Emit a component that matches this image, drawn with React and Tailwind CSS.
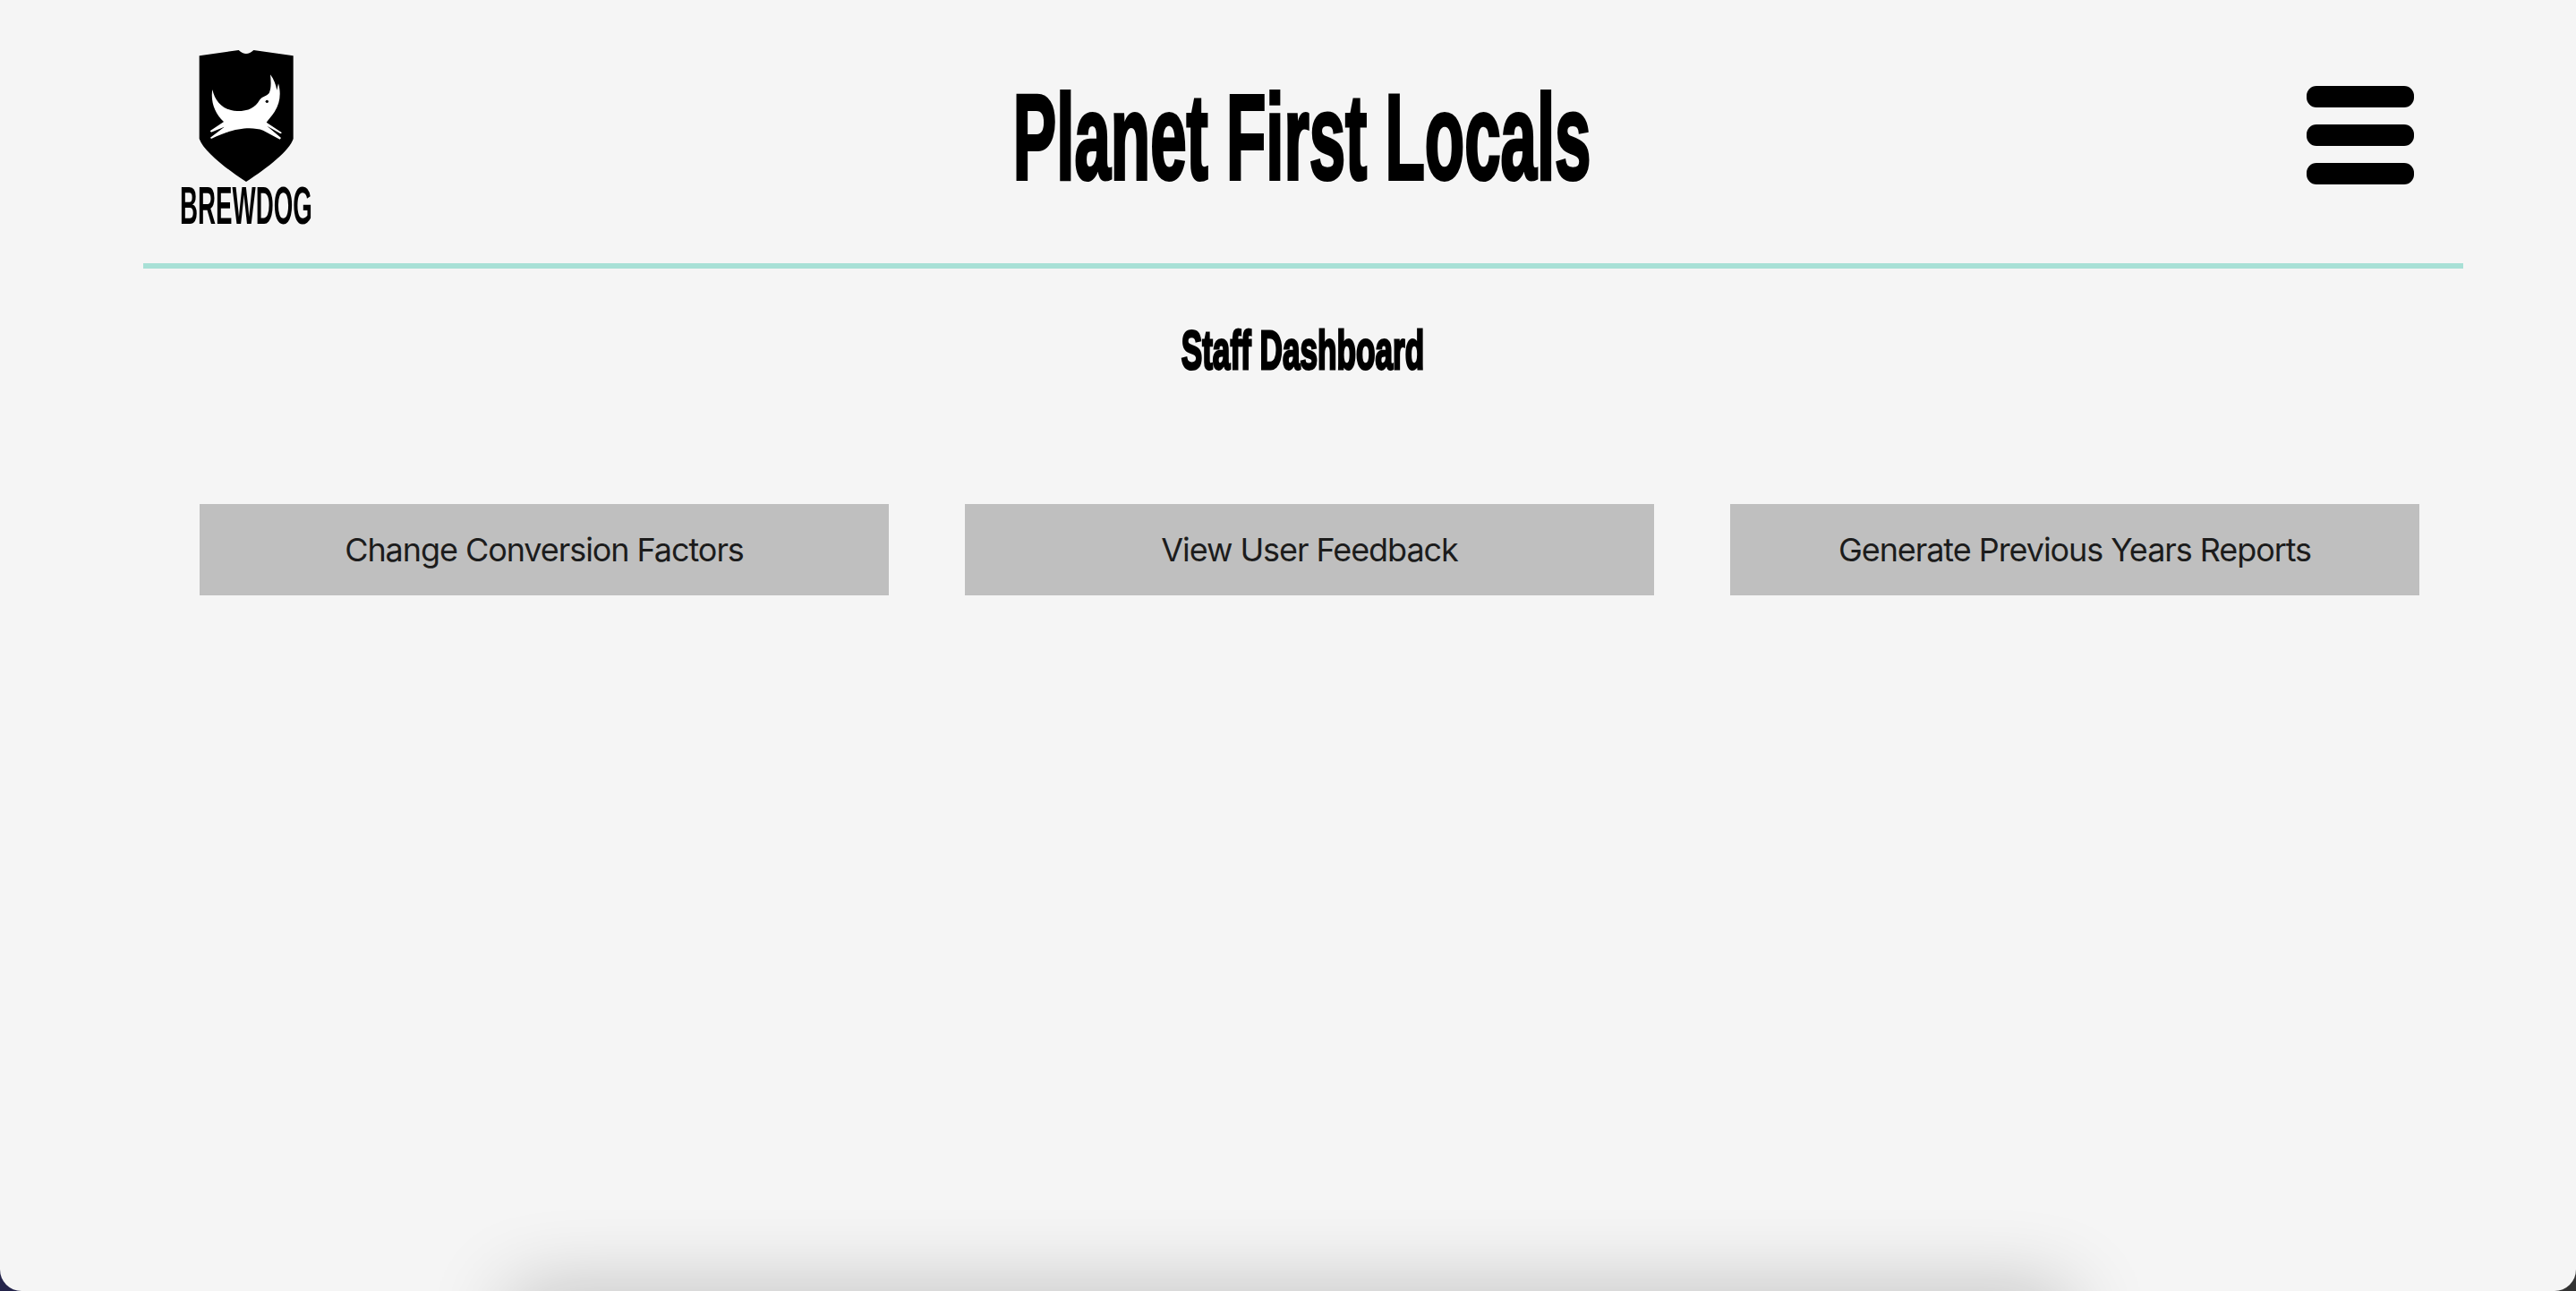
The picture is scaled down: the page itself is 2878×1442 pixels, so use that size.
const displayFont = "font-['Liberation_Sans',sans-serif] font-bold";

function Logo() {
  return (
    <div className="flex w-[150px] flex-col items-center">
      <svg width="150" height="148" viewBox="150 78 450 444" className="block blur-[0.5px]">
        <path d="M218 97 L350 78 Q375 102 400 78 L533 97 L533 375 C520 415 450 470 375 519 C300 470 232 415 218 375 Z" fill="#000" />
        <path
          d="M262 210 C270 250 300 282 345 282 C385 282 405 270 420 245 C430 232 445 232 452 222 C460 205 458 180 456 160 C468 175 475 195 478 212 L483 190 C492 220 490 255 470 285 C460 300 450 310 443 320 L495 355 L490 358 L445 332 L492 372 L488 377 L432 347 C395 335 340 335 258 375 L255 371 L302 335 L258 353 L254 349 L300 318 C270 290 255 250 262 210 Z"
          fill="#fff"
        />
        <circle cx="445" cy="250" r="5" fill="#000" />
      </svg>
      <div className="-mt-[4px] flex w-[150px] justify-center">
        <span className={`${displayFont} shrink-0 scale-x-[0.462] whitespace-nowrap text-[60px] leading-[60px] text-black`}>
          BREWDOG
        </span>
      </div>
    </div>
  );
}

function Menu() {
  return (
    <div className="flex w-[120px] flex-col gap-[19px] blur-[0.5px]">
      <div className="h-6 rounded-[11px] bg-black" />
      <div className="h-6 rounded-[11px] bg-black" />
      <div className="h-6 rounded-[11px] bg-black" />
    </div>
  );
}

function ActionButton({ children }) {
  return (
    <button className="flex h-[102px] w-[770px] items-center justify-center bg-[#bfbfbf] font-['Inter',sans-serif] text-[36px] tracking-[-1.07px] text-[#1c1c1c]">
      {children}
    </button>
  );
}

export default function App() {
  return (
    <div className="h-screen w-full bg-gradient-to-r from-[#23234a] to-[#333333]">
      <div className="relative h-full w-full overflow-hidden rounded-b-[24px] bg-[#f5f5f5]">
        <div className="ml-[160px] w-[2592px]">
          <header className="flex h-[300px] items-start border-b-[6px] border-[#a8e0d6] pl-[40px] pr-[55px]">
            <div className="mt-[56px]">
              <Logo />
            </div>
            <div className="flex flex-1 justify-center pr-[18px] pt-[78px]">
              <h1 className={`${displayFont} origin-center scale-x-[0.534] whitespace-nowrap text-[136px] leading-[150px] text-black [-webkit-text-stroke:4px_black]`}>
                Planet First Locals
              </h1>
            </div>
            <div className="mt-[96px]">
              <Menu />
            </div>
          </header>
          <h2 className={`${displayFont} mt-[53px] scale-x-[0.567] whitespace-nowrap pr-[2px] text-center text-[62px] leading-[76px] text-black [-webkit-text-stroke:3px_black]`}>
            Staff Dashboard
          </h2>
          <div className="mt-[134px] flex gap-[85px] pl-[63px]">
            <ActionButton>Change Conversion Factors</ActionButton>
            <ActionButton>View User Feedback</ActionButton>
            <ActionButton>Generate Previous Years Reports</ActionButton>
          </div>
        </div>
        <div className="absolute left-[570px] top-[1442px] h-[80px] w-[1741px] bg-[#d8d8d8] shadow-[0_0_90px_rgba(0,0,0,0.24)]" />
      </div>
    </div>
  );
}
